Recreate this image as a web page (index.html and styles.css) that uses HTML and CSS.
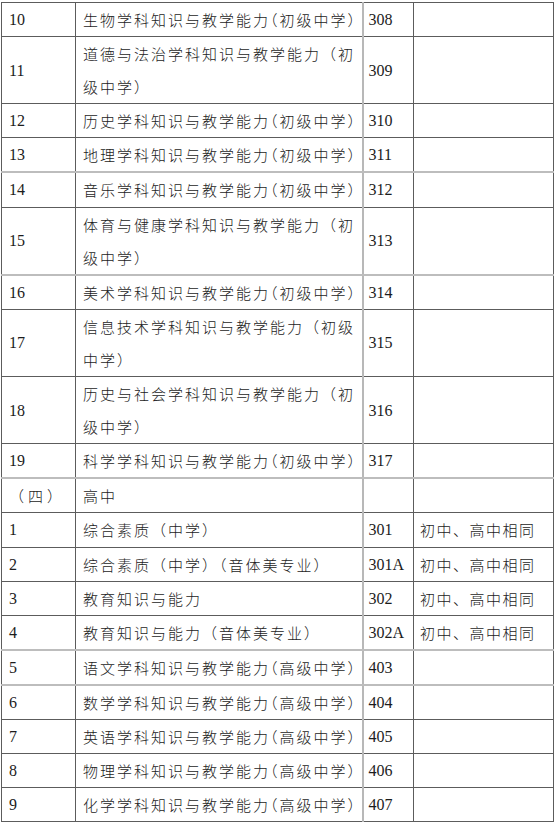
FILE: index.html
```html
<!DOCTYPE html>
<html lang="zh-CN">
<head>
<meta charset="utf-8">
<title>考试科目</title>
<link rel="stylesheet" href="styles.css">
</head>
<body>
<table class="grid">
  <colgroup><col class="c1"><col class="c2"><col class="c3"><col class="c4"></colgroup>
  <tr><td class="n">10</td><td class="zh">生物学科知识与教学能力<span class="cp">（</span>初级中学<span class="cp">）</span></td><td class="n code">308</td><td class="zh note"></td></tr>
  <tr><td class="n">11</td><td class="zh">道德与法治学科知识与教学能力（初<br>级中学）</td><td class="n code">309</td><td class="zh note"></td></tr>
  <tr><td class="n">12</td><td class="zh">历史学科知识与教学能力<span class="cp">（</span>初级中学<span class="cp">）</span></td><td class="n code">310</td><td class="zh note"></td></tr>
  <tr class="lt"><td class="n">13</td><td class="zh">地理学科知识与教学能力<span class="cp">（</span>初级中学<span class="cp">）</span></td><td class="n code">311</td><td class="zh note"></td></tr>
  <tr><td class="n">14</td><td class="zh">音乐学科知识与教学能力<span class="cp">（</span>初级中学<span class="cp">）</span></td><td class="n code">312</td><td class="zh note"></td></tr>
  <tr class="lt"><td class="n">15</td><td class="zh">体育与健康学科知识与教学能力（初<br>级中学）</td><td class="n code">313</td><td class="zh note"></td></tr>
  <tr><td class="n">16</td><td class="zh">美术学科知识与教学能力<span class="cp">（</span>初级中学<span class="cp">）</span></td><td class="n code">314</td><td class="zh note"></td></tr>
  <tr><td class="n">17</td><td class="zh">信息技术学科知识与教学能力（初级<br>中学）</td><td class="n code">315</td><td class="zh note"></td></tr>
  <tr><td class="n">18</td><td class="zh">历史与社会学科知识与教学能力（初<br>级中学）</td><td class="n code">316</td><td class="zh note"></td></tr>
  <tr class="lt"><td class="n">19</td><td class="zh">科学学科知识与教学能力<span class="cp">（</span>初级中学<span class="cp">）</span></td><td class="n code">317</td><td class="zh note"></td></tr>
  <tr><td class="zh sec">（四）</td><td class="zh">高中</td><td class="n code"></td><td class="zh note"></td></tr>
  <tr><td class="n">1</td><td class="zh">综合素质（中学）</td><td class="n code">301</td><td class="zh note">初中、高中相同</td></tr>
  <tr><td class="n">2</td><td class="zh">综合素质（中学）（音体美专业）</td><td class="n code">301A</td><td class="zh note">初中、高中相同</td></tr>
  <tr><td class="n">3</td><td class="zh">教育知识与能力</td><td class="n code">302</td><td class="zh note">初中、高中相同</td></tr>
  <tr class="lt"><td class="n">4</td><td class="zh">教育知识与能力（音体美专业）</td><td class="n code">302A</td><td class="zh note">初中、高中相同</td></tr>
  <tr class="lt"><td class="n">5</td><td class="zh">语文学科知识与教学能力<span class="cp">（</span>高级中学<span class="cp">）</span></td><td class="n code">403</td><td class="zh note"></td></tr>
  <tr><td class="n">6</td><td class="zh">数学学科知识与教学能力<span class="cp">（</span>高级中学<span class="cp">）</span></td><td class="n code">404</td><td class="zh note"></td></tr>
  <tr><td class="n">7</td><td class="zh">英语学科知识与教学能力<span class="cp">（</span>高级中学<span class="cp">）</span></td><td class="n code">405</td><td class="zh note"></td></tr>
  <tr><td class="n">8</td><td class="zh">物理学科知识与教学能力<span class="cp">（</span>高级中学<span class="cp">）</span></td><td class="n code">406</td><td class="zh note"></td></tr>
  <tr><td class="n">9</td><td class="zh">化学学科知识与教学能力<span class="cp">（</span>高级中学<span class="cp">）</span></td><td class="n code">407</td><td class="zh note"></td></tr>
</table>
</body>
</html>
```
FILE: styles.css
```css
html, body {
  margin: 0;
  padding: 0;
  background: #ffffff;
}

body {
  padding-top: 2px;
  color: #1c1c1c;
  font-family: "Liberation Serif", "Noto Sans CJK SC", serif;
}

.grid {
  border-collapse: collapse;
  table-layout: fixed;
  width: 552px;
  margin-left: 1px;
}

.c1 { width: 74px; }
.c2 { width: 287px; }
.c3 { width: 51px; }
.c4 { width: 140px; }

.grid td {
  border: 1px solid #5c5c5c;
  padding: 0 0 0 7px;
  line-height: 33.1px;
  white-space: nowrap;
  vertical-align: middle;
}

.grid tr.lt td {
  border-bottom: 2px solid #bdbdbd;
}

.grid td.n {
  font-family: "Liberation Serif", serif;
  font-size: 16px;
}

.grid td.code {
  border-left: 2px solid #b8b8b8;
  padding-left: 5px;
}

.grid td.zh {
  font-family: "Noto Sans CJK SC", sans-serif;
  font-weight: 300;
  font-size: 15px;
  letter-spacing: 2px;
}

.grid td.sec {
  letter-spacing: 4px;
  padding-left: 7px;
}

.grid td.note {
  padding-left: 6px;
  letter-spacing: 1.5px;
}

.cp {
  font-feature-settings: "halt" 1;
}
```
